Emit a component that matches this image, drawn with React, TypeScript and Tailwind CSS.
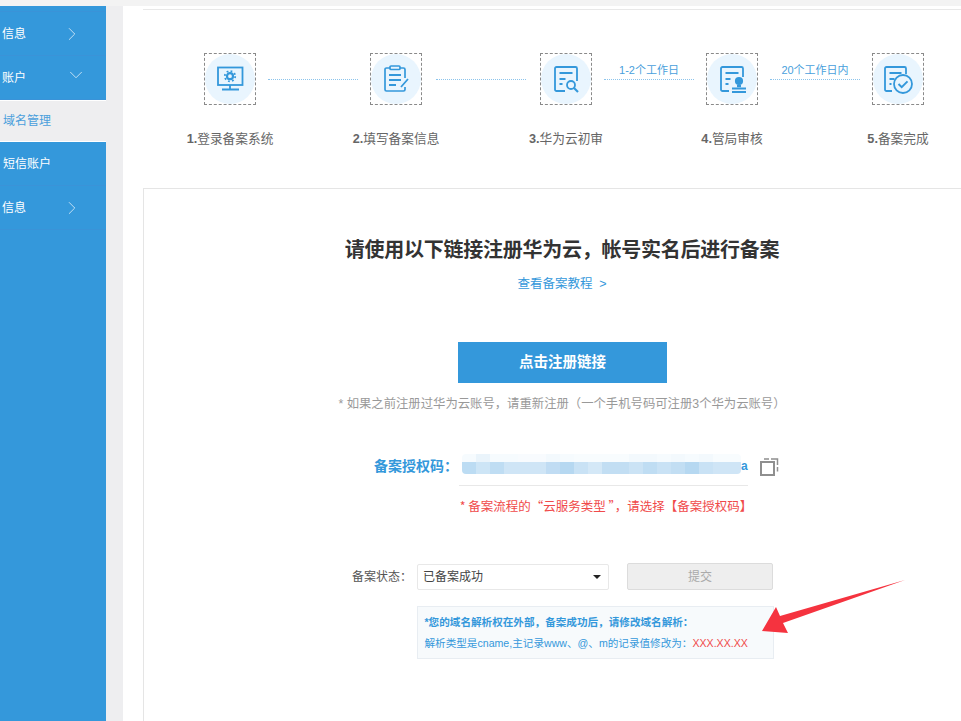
import { ChevronDown, ChevronRight } from "lucide-react";
import type { ReactNode } from "react";

const FONT = "font-['Liberation_Sans','Noto_Sans_CJK_SC',sans-serif]";

// pixelated smear over the auth code, two rows of cells
const BLUR_TOP = ["#f6fbfe", "#eaf4fb", "#f6fbfe", "#f6fbfe", "#f8fbfe", "#f8fbfe", "#f3f9fd", "#f6fbfe", "#f8fcfe", "#f8fcfe", "#f8fcfe", "#f8fcfe", "#f3f9fd", "#f3f9fd", "#f6fbfe", "#f3f9fd", "#f6fbfe", "#f3f9fd", "#f8fcfe", "#f8fcfe"];
const BLUR_BOTTOM = ["#bcdcf3", "#cde5f6", "#bfddf3", "#cfe5f6", "#cfe5f6", "#cfe5f6", "#c0dcf3", "#b6d8f1", "#c9e2f5", "#d4e8f7", "#c2def3", "#c2def3", "#cbe3f5", "#bfddf3", "#c9e2f5", "#c2def3", "#b6d8f1", "#c9e2f5", "#cfe5f6", "#cfe5f6"];

function SideItem({ label, icon, indent }: { label: string; icon?: ReactNode; indent?: boolean }) {
  return (
    <div className={`flex h-[44px] items-center justify-between border-b border-[#3a93d8] pr-[23px] text-[12px] text-white ${indent ? "pl-[3px]" : "pl-[2px]"}`}>
      <span>{label}</span>
      {icon}
    </div>
  );
}

function MonitorIcon() {
  return (
    <svg viewBox="0 0 30 30" className="h-[30px] w-[30px]" fill="none" stroke="#3498db">
      <rect x="3" y="3.500" width="24.500" height="17.500" strokeWidth="1.800" />
      <path d="M15 21v4M7 25.500h17" strokeWidth="1.800" />
      <circle cx="15" cy="12.200" r="3" strokeWidth="2.200" />
      <circle cx="15" cy="12.200" r="5.200" strokeWidth="1.800" strokeDasharray="1.800 2.280" />
    </svg>
  );
}

function ClipboardIcon() {
  return (
    <svg viewBox="0 0 30 30" className="h-[30px] w-[30px]" fill="none" stroke="#3498db" strokeWidth="1.700">
      <path d="M9 4H5.500A1.500 1.500 0 0 0 4 5.500V25.500A1.500 1.500 0 0 0 5.500 27H22.500A1.500 1.500 0 0 0 24 25.500V23M24 14V5.500A1.500 1.500 0 0 0 22.500 4H19" />
      <rect x="9" y="2" width="10" height="3.500" rx="1" />
      <path d="M8 11h12M8 16h12M8 21h7M20 23l7-8" strokeWidth="1.800" />
    </svg>
  );
}

function SearchDocIcon() {
  return (
    <svg viewBox="0 0 30 30" className="h-[30px] w-[30px]" fill="none" stroke="#3498db" strokeWidth="1.800">
      <path d="M14 27H5.500A1.500 1.500 0 0 1 4 25.500V4.500A1.500 1.500 0 0 1 5.500 3H24.500A1.500 1.500 0 0 1 26 4.500V17" />
      <path d="M8.500 9h13M8.500 15h6M8.500 20h3" />
      <circle cx="20" cy="21" r="4" />
      <path d="M23 24l4 4" strokeWidth="2.200" />
    </svg>
  );
}

function StampIcon() {
  return (
    <svg viewBox="0 0 30 30" className="h-[30px] w-[30px]" fill="none" stroke="#3498db" strokeWidth="1.800">
      <path d="M12 27H5.500A1.500 1.500 0 0 1 4 25.500V4.500A1.500 1.500 0 0 1 5.500 3H24.500A1.500 1.500 0 0 1 26 4.500V13" />
      <path d="M8.500 9h13M8.500 15h5M8.500 20h3" />
      <circle cx="22" cy="17" r="3.200" fill="#3498db" />
      <path d="M20 22h4" strokeWidth="2.500" />
      <path d="M15 24.500h14M15 28h14" strokeWidth="1.900" />
    </svg>
  );
}

function DoneIcon() {
  return (
    <svg viewBox="0 0 30 30" className="h-[30px] w-[30px]" fill="none" stroke="#3498db" strokeWidth="1.800">
      <path d="M9 27H3.500A1.500 1.500 0 0 1 2 25.500V4.500A1.500 1.500 0 0 1 3.500 3H21.500A1.500 1.500 0 0 1 23 4.500V10" />
      <path d="M6.500 9h12M6.500 15h5M6.500 20h2" />
      <circle cx="20" cy="20" r="9" />
      <path d="M15.500 20l3.200 3.200 5.800-5.800" strokeWidth="2" />
    </svg>
  );
}

function Step({ icon, label }: { icon: ReactNode; label: string }) {
  return (
    <div className="flex w-[52px] flex-col items-center">
      <div className="relative flex h-[52px] w-[52px] items-center justify-center">
        <div className="flex h-[50px] w-[50px] items-center justify-center rounded-full bg-[#e9f5fe]">{icon}</div>
        <div className="absolute inset-0 border border-dashed border-[#8a8a8a]" />
      </div>
      <div className="mt-[26px] whitespace-nowrap text-[12.7px] leading-[16px] text-[#666]">
        <span className="font-bold">{label.slice(0, 2)}</span>
        {label.slice(2)}
      </div>
    </div>
  );
}

function Connector({ label, className }: { label?: string; className: string }) {
  return (
    <div className={`flex h-[52px] w-[90px] flex-col items-center ${className}`}>
      <div className="mt-[9px] h-[16px] text-[11px] leading-[16px] text-[#4a9fdc]">{label}</div>
      <div className="mt-[1px] w-full border-t border-dotted border-[#8cc4ec]" />
    </div>
  );
}

export default function App() {
  return (
    <div className={`flex h-[721px] w-[961px] flex-col overflow-hidden bg-[#f3f3f3] ${FONT}`}>
      <div className="h-[6px] shrink-0" />
      <div className="flex min-h-0 flex-1">
        <aside className="w-[106px] shrink-0 bg-[#3498db]">
          <div className="h-[6px] border-b border-[#3a93d8]" />
          <SideItem label="信息" icon={<ChevronRight size={22} strokeWidth={1} className="text-white/75" />} />
          <SideItem label="账户" icon={<ChevronDown size={22} strokeWidth={1} className="-mr-[4px] mb-[6px] text-white/75" />} />
          <div className="flex h-[42px] items-center border-y border-white bg-[#eeeef0] pl-[3px] text-[12px] text-[#4a9fdc]">
            域名管理
          </div>
          <SideItem label="短信账户" indent />
          <SideItem label="信息" icon={<ChevronRight size={22} strokeWidth={1} className="text-white/75" />} />
        </aside>
        <div className="w-[17px] shrink-0 bg-[#eeeef0]" />
        <main className="min-w-0 flex-1 bg-white pl-[20px] pt-[3px]">
          <div className="w-[838px]">
            <div className="h-[1px] bg-[#e8e8e8]" />
            <div className="flex h-[178px] pl-[61px] pt-[43px]">
              <Step icon={<MonitorIcon />} label="1.登录备案系统" />
              <Connector className="ml-[12px]" />
              <div className="ml-[12px]">
                <Step icon={<ClipboardIcon />} label="2.填写备案信息" />
              </div>
              <Connector className="ml-[14px]" />
              <div className="ml-[14px]">
                <Step icon={<SearchDocIcon />} label="3.华为云初审" />
              </div>
              <Connector className="ml-[12px]" label="1-2个工作日" />
              <div className="ml-[12px]">
                <Step icon={<StampIcon />} label="4.管局审核" />
              </div>
              <Connector className="ml-[12px]" label="20个工作日内" />
              <div className="ml-[12px]">
                <Step icon={<DoneIcon />} label="5.备案完成" />
              </div>
            </div>

            <section className="relative flex h-[540px] flex-col items-center border border-[#e5e5e5] pt-[46px]">
              <h1 className="text-[20px] font-bold leading-[30px] tracking-[-0.25px] text-[#333]">请使用以下链接注册华为云，帐号实名后进行备案</h1>
              <a className="mt-[10px] whitespace-pre text-[12.5px] leading-[18px] text-[#3498db]">查看备案教程  &gt;</a>
              <button className="ml-[1px] mt-[49px] h-[41px] w-[209px] bg-[#3498db] text-[14.5px] font-bold text-white">点击注册链接</button>
              <p className="mt-[12px] text-[12.35px] leading-[18px] text-[#999]">* 如果之前注册过华为云账号，请重新注册（一个手机号码可注册3个华为云账号）</p>

              <div className="ml-[28px] mt-[37px] flex h-[32px] w-[404px] items-center">
                <span className="w-[88px] shrink-0 whitespace-nowrap text-[14px] font-bold text-[#3498db]">备案授权码：</span>
                <div className="mb-[4px] flex h-[20px] w-[279px] shrink-0 flex-col overflow-hidden rounded-[4px]">
                  <div className="flex h-[8px]">
                    {BLUR_TOP.map((c, i) => (
                      <div key={i} className="flex-1" style={{ backgroundColor: c }} />
                    ))}
                  </div>
                  <div className="flex h-[12px]">
                    {BLUR_BOTTOM.map((c, i) => (
                      <div key={i} className="flex-1" style={{ backgroundColor: c }} />
                    ))}
                  </div>
                </div>
                <span className="text-[12px] font-bold text-[#3498db]">a</span>
                <svg viewBox="0 0 19 19" className="ml-[12px] h-[19px] w-[19px] shrink-0" fill="none" stroke="#8f8f8f" strokeWidth="1.500">
                  <rect x="1" y="5" width="13" height="13" strokeWidth="2" />
                  <path d="M4 2h5M11 2h6.500v6M17.500 10v4.500" />
                </svg>
              </div>
              <div className="ml-[82px] mt-[3px] h-[1px] w-[289px] bg-[#e8e8e8]" />
              <p className="ml-[88px] mt-[11px] font-['Noto_Sans_CJK_SC',sans-serif] text-[12.5px] leading-[18px] text-[#f04a4a]">* 备案流程的“云服务类型 ”，请选择【备案授权码】</p>

              <div className="ml-[1px] mt-[48px] flex h-[27px] items-center">
                <span className="w-[65px] whitespace-nowrap text-[12px] text-[#555]">备案状态：</span>
                <div className="flex h-[26px] w-[192px] items-center justify-between rounded-[2px] border border-[#e8e8e8] pl-[5px] pr-[7px] text-[12px] text-[#444]">
                  已备案成功
                  <span className="h-0 w-0 border-x-[4px] border-t-[4px] border-x-transparent border-t-[#222]" />
                </div>
                <button className="ml-[18px] h-[27px] w-[146px] rounded-[2px] border border-[#dcdcdc] bg-[#eeeeee] text-[12px] text-[#aaa]">提交</button>
              </div>

              <div className="ml-[66px] mt-[16px] flex h-[53px] w-[357px] flex-col justify-center gap-[6px] border border-[#e8edf2] bg-[#f7fafc] pl-[7px] text-[10.6px] leading-[15px] text-[#3498db]">
                <p className="font-bold">*您的域名解析权在外部，备案成功后，请修改域名解析：</p>
                <p>
                  解析类型是cname,主记录www、@、m的记录值修改为：<span className="text-[#f04a4a]">XXX.XX.XX</span>
                </p>
              </div>

              <svg viewBox="0 0 144 54" className="absolute left-[618px] top-[391px] h-[54px] w-[144px]">
                <polygon points="143,0 21,43 26,53 0,51 14,27 18,36" fill="#f5333f" />
              </svg>
            </section>
          </div>
        </main>
      </div>
    </div>
  );
}
